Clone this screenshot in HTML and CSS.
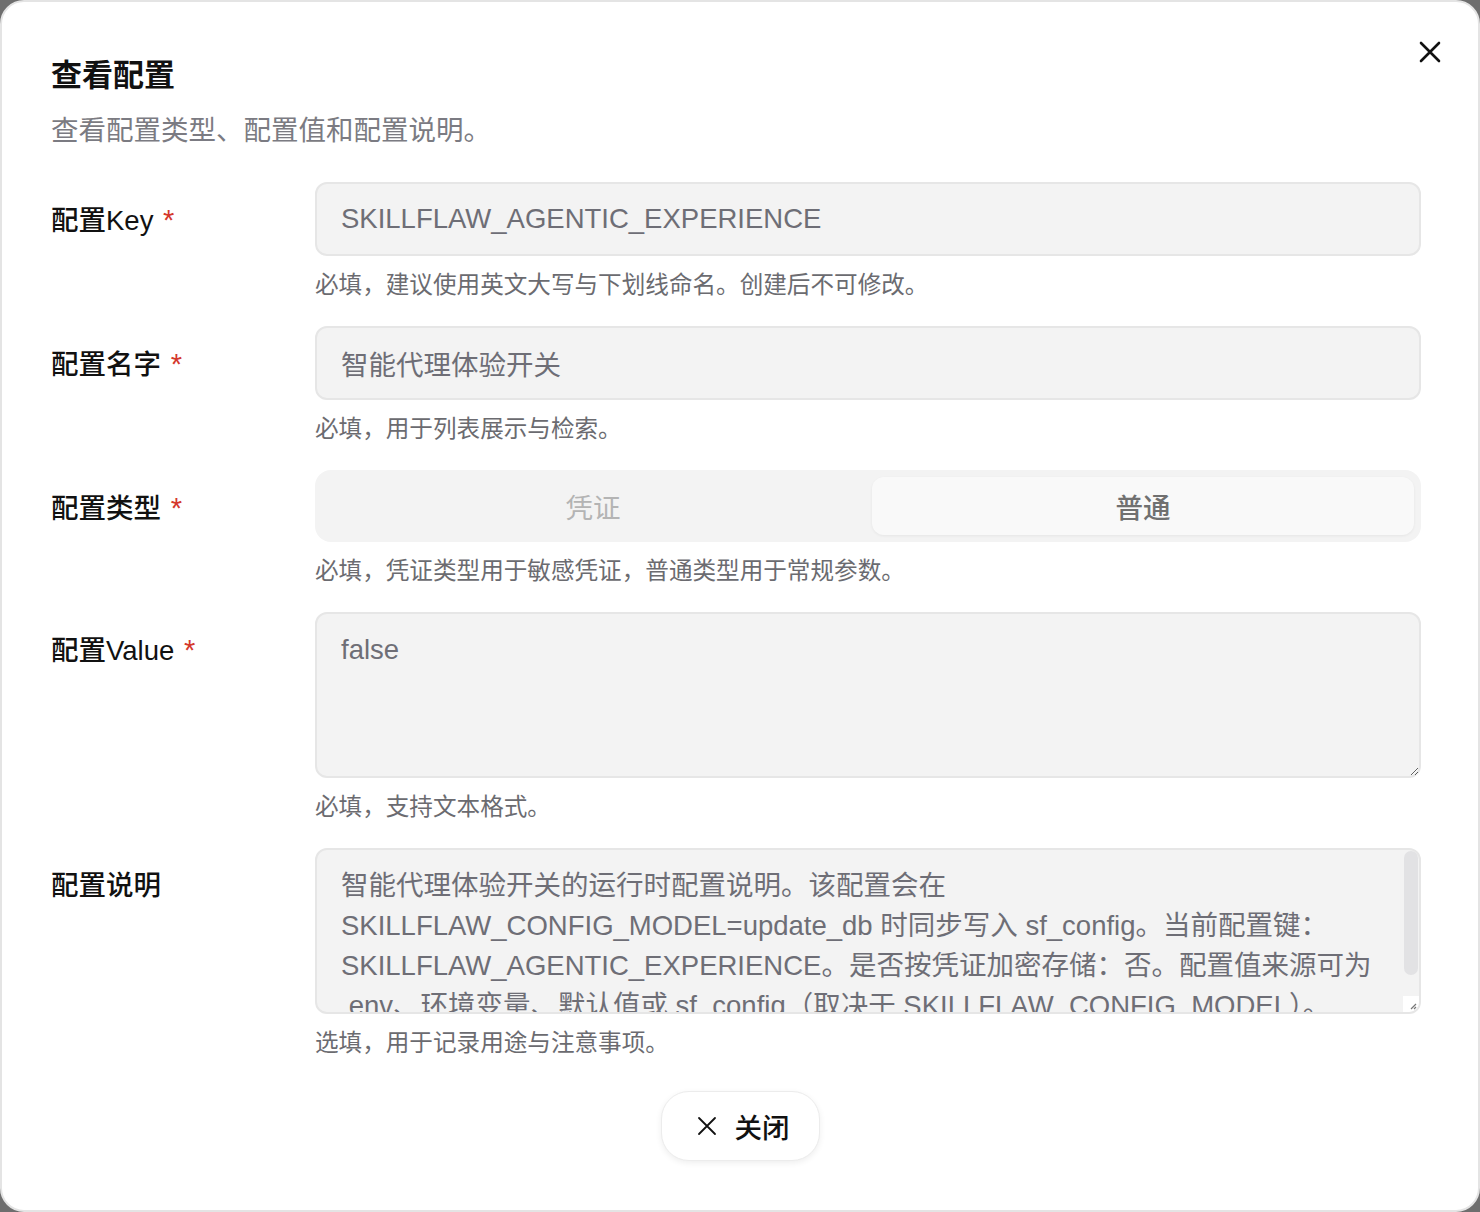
FILE: index.html
```html
<!DOCTYPE html>
<html lang="zh-CN">
<head>
  <meta charset="UTF-8" />
  <meta name="viewport" content="width=device-width, initial-scale=1" />
  <title>查看配置</title>
  <link rel="stylesheet" href="styles.css">
</head>
<body>
  <div class="dialog">
    <button class="dialog-close" aria-label="关闭">
      <svg viewBox="0 0 24 24" width="24" height="24"><path d="M3 3 L21 21 M21 3 L3 21" /></svg>
    </button>

    <h1 class="dialog-title">查看配置</h1>
    <p class="dialog-desc">查看配置类型、配置值和配置说明。</p>

    <div class="form">
      <div class="form-label">配置Key <span class="req">*</span></div>
      <div class="form-field">
        <input class="input" type="text" value="SKILLFLAW_AGENTIC_EXPERIENCE" readonly>
        <div class="hint">必填，建议使用英文大写与下划线命名。创建后不可修改。</div>
      </div>

      <div class="form-label">配置名字 <span class="req">*</span></div>
      <div class="form-field">
        <input class="input" type="text" value="智能代理体验开关" readonly>
        <div class="hint">必填，用于列表展示与检索。</div>
      </div>

      <div class="form-label">配置类型 <span class="req">*</span></div>
      <div class="form-field">
        <div class="segmented">
          <div class="seg-option">凭证</div>
          <div class="seg-option active">普通</div>
        </div>
        <div class="hint">必填，凭证类型用于敏感凭证，普通类型用于常规参数。</div>
      </div>

      <div class="form-label">配置Value <span class="req">*</span></div>
      <div class="form-field">
        <textarea class="input textarea" readonly>false</textarea>
        <div class="hint">必填，支持文本格式。</div>
      </div>

      <div class="form-label">配置说明</div>
      <div class="form-field">
        <div class="scroll-box">
          <textarea class="input textarea scroll" readonly>智能代理体验开关的运行时配置说明。该配置会在 SKILLFLAW_CONFIG_MODEL=update_db 时同步写入 sf_config。当前配置键：SKILLFLAW_AGENTIC_EXPERIENCE。是否按凭证加密存储：否。配置值来源可为 .env、环境变量、默认值或 sf_config（取决于 SKILLFLAW_CONFIG_MODEL）。</textarea>
          <!-- scrollbar thumb + resize corner (native bars are hidden in the capture) -->
          <div class="scroll-thumb"></div>
          <div class="scroll-corner">
            <svg viewBox="0 0 16 16" width="16" height="16"><path d="M13 8 L8 13 M13 11 L11 13" /></svg>
          </div>
        </div>
        <div class="hint">选填，用于记录用途与注意事项。</div>
      </div>
    </div>

    <div class="dialog-footer">
      <button class="btn">
        <svg viewBox="0 0 20 20" width="20" height="20"><path d="M2 2 L18 18 M18 2 L2 18" /></svg>
        关闭
      </button>
    </div>
  </div>
</body>
</html>
```

FILE: styles.css
```css
* {
  box-sizing: border-box;
}
html, body {
  margin: 0;
  height: 100%;
}
body {
  background: #6e6e6e;
  font-family: "Liberation Sans", "Noto Sans CJK SC", sans-serif;
  color: #111;
}
.dialog {
  position: relative;
  height: 100%;
  background: #fff;
  border: 2px solid #e4e4e4;
  border-radius: 24px;
  padding: 54px 57px 0 49px;
}
.dialog-close {
  position: absolute;
  top: 38px;
  right: 36px;
  width: 24px;
  height: 24px;
  padding: 0;
  border: 0;
  background: none;
  cursor: pointer;
}
.dialog-close svg {
  display: block;
  stroke: #111;
  stroke-width: 2.6;
  stroke-linecap: round;
  fill: none;
}
.dialog-title {
  margin: 0;
  font-size: 31px;
  line-height: 40px;
  font-weight: 700;
}
.dialog-desc {
  margin: 15px 0 0;
  font-size: 27.5px;
  line-height: 40px;
  color: #7b7b82;
}
.form {
  display: grid;
  grid-template-columns: 264px 1fr;
  row-gap: 25px;
  margin-top: 31px;
}
.form-label {
  padding-top: 20px;
  font-size: 27.5px;
  line-height: 36px;
  font-weight: 500;
  color: #111;
}
.req {
  color: #d4382c;
  margin-left: 2px;
  font-size: 29px;
}
.input {
  display: block;
  width: 100%;
  height: 74px;
  padding: 0 24px;
  border: 2px solid #e6e6e6;
  border-radius: 12px;
  background: #f3f3f3;
  font-family: inherit;
  font-size: 27.5px;
  color: #6e6e76;
  outline: none;
}
.textarea {
  height: 166px;
  padding-top: 16px;
  padding-bottom: 16px;
  line-height: 40px;
  resize: vertical;
}
.scroll-box {
  position: relative;
}
.textarea.scroll {
  padding-right: 40px;
  overflow: hidden;
  resize: none;
}
.scroll-thumb {
  position: absolute;
  top: 3px;
  right: 3px;
  width: 14px;
  height: 124px;
  border-radius: 7px;
  background: #e2e2e4;
}
.scroll-corner {
  position: absolute;
  right: 2px;
  bottom: 2px;
  width: 16px;
  height: 16px;
  background: #fff;
  border-bottom-right-radius: 10px;
}
.scroll-corner svg {
  display: block;
  stroke: #777;
  stroke-width: 1.2;
  fill: none;
}
.hint {
  margin-top: 13px;
  font-size: 23.6px;
  line-height: 32px;
  color: #6b6b70;
}
.segmented {
  display: grid;
  grid-template-columns: 1fr 1fr;
  gap: 8px;
  height: 72px;
  padding: 7px;
  background: #f3f3f3;
  border-radius: 16px;
}
.seg-option {
  display: flex;
  align-items: center;
  justify-content: center;
  border-radius: 12px;
  font-size: 27.5px;
  color: #b4b4b4;
}
.seg-option.active {
  background: #f9f9f9;
  color: #707070;
  font-weight: 500;
  box-shadow: 0 1px 3px rgba(0, 0, 0, 0.06);
}
.dialog-footer {
  display: flex;
  justify-content: center;
  padding-left: 8px;
  margin-top: 32px;
}
.btn {
  display: flex;
  align-items: center;
  gap: 18px;
  height: 70px;
  padding: 0 29px 0 35px;
  background: #fff;
  border: 1.5px solid #ececec;
  border-radius: 28px;
  box-shadow: 0 2px 6px rgba(0, 0, 0, 0.07);
  font-family: inherit;
  font-size: 27.5px;
  font-weight: 500;
  color: #111;
  cursor: pointer;
}
.btn svg {
  stroke: #111;
  stroke-width: 1.8;
  stroke-linecap: round;
  fill: none;
}
```
